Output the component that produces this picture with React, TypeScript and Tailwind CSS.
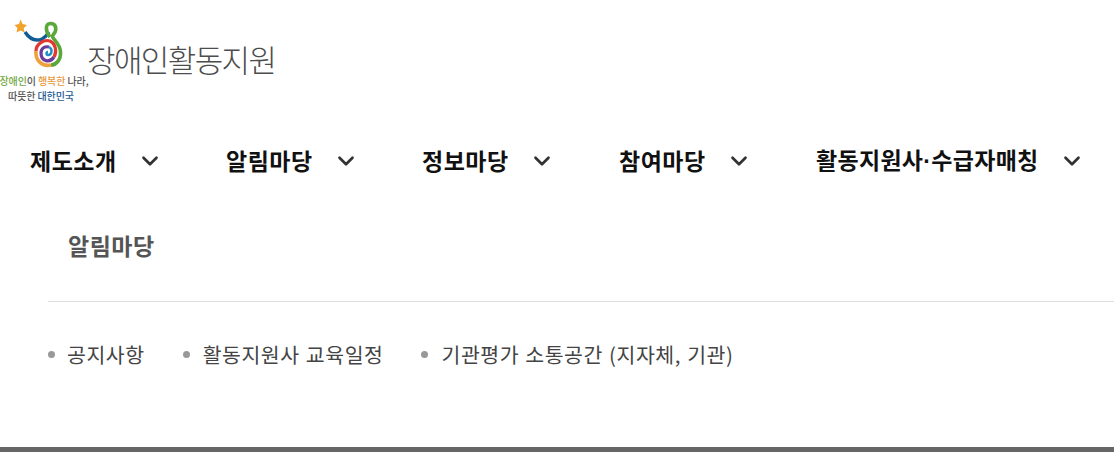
import { ChevronDown } from "lucide-react";

const font = { fontFamily: '"Noto Sans CJK KR", "Noto Sans", sans-serif' };

const menus = [
  { label: "제도소개", cls: "w-[196px]" },
  { label: "알림마당", cls: "w-[196px]" },
  { label: "정보마당", cls: "w-[197px]" },
  { label: "참여마당", cls: "w-[197px]" },
];

const Logo = () => (
  <svg viewBox="0 0 70 72" className="absolute left-0 top-0 h-[72px] w-[70px]">
    <polygon points="20.500,19.500 22.600,24 27,25 23.700,28.200 24.700,32.500 20.600,30.400 16.600,32.500 17.400,28 14.500,25 19,24" fill="#f0a42c" />
    <path d="M25 32 C29 38 35 42 42 39 C46 37 47 35 49 32" fill="none" stroke="#0f5c97" strokeWidth="3.400" />
    <path d="M50 37 C45 31 45 23 51 23.500 C57 24 57 31 53 35 C50 38 60 42 60.500 52 C61 60 56 65 51 65" fill="none" stroke="#5aa83a" strokeWidth="3.600" />
    <path d="M51 65 C42 67 35 60 36 51" fill="none" stroke="#f0a03a" strokeWidth="3.600" />
    <path d="M36 51 C36 44 44 39 50 41 C56 44 57 52 54 57" fill="none" stroke="#e2382d" strokeWidth="3.200" />
    <path d="M54 57 C50 63 41 62 41 53 C41 48 45 46 49 47" fill="none" stroke="#6b3a9e" strokeWidth="3.200" />
    <path d="M49 47 C53 49 52 55 48 55 C46 55 46 52 48 52" fill="none" stroke="#1f8fc4" strokeWidth="2.400" />
  </svg>
);

export default function App() {
  return (
    <div className="relative h-[452px] w-[1114px] overflow-hidden bg-white" style={font}>
      <header className="relative h-[124px]">
        <Logo />
        <div className="absolute left-[-1px] top-[73px] w-[90px] text-center text-[10px] leading-[15px] font-medium tracking-[-0.1px] text-[#555]">
          <div className="whitespace-nowrap">
            <span className="text-[#6fa83f]">장애인</span>이 <span className="text-[#e8973a]">행복한</span> 나라,
          </div>
          <div className="whitespace-nowrap pr-[6px]">
            따뜻한 <span className="text-[#1c5a94]">대한민국</span>
          </div>
        </div>
        <div className="absolute left-[87px] top-[37px] text-[31px] leading-[44px] tracking-[-1.6px] font-light text-[#4d4d4d]">
          장애인활동지원
        </div>
      </header>

      <nav className="flex h-[73px] items-center pl-[30px]">
        {menus.map((m) => (
          <div key={m.label} className={`flex items-center ${m.cls}`}>
            <span className="pb-[2px] text-[23px] leading-[32px] font-bold tracking-[0.5px] text-[#111]">{m.label}</span>
            <ChevronDown className="ml-[20px] h-[26px] w-[26px] text-[#333]" strokeWidth={2.5} />
          </div>
        ))}
        <div className="flex items-center">
          <span className="pb-[2px] text-[23px] leading-[32px] font-bold tracking-[0.3px] text-[#111]">
            활동지원사<span className="[font-family:'Liberation_Sans']">·</span>수급자매칭
          </span>
          <ChevronDown className="ml-[20px] h-[26px] w-[26px] text-[#333]" strokeWidth={2.5} />
        </div>
      </nav>

      <div className="pl-[48px]">
        <div className="flex h-[105px] items-center border-b border-[#dddddd] pb-[8px] pl-[20px]">
          <h2 className="text-[23px] leading-[32px] font-bold tracking-[0.5px] text-[#555]">알림마당</h2>
        </div>
        <ul className="flex pt-[37px] text-[20.5px] leading-[30px] tracking-[0.55px] [word-spacing:1px] text-[#444]">
          <li className="flex items-center">
            <span className="mr-[12px] h-[7px] w-[7px] rounded-full bg-[#999]" />
            공지사항
          </li>
          <li className="ml-[38px] flex items-center">
            <span className="mr-[13px] h-[7px] w-[7px] rounded-full bg-[#999]" />
            활동지원사 교육일정
          </li>
          <li className="ml-[38px] flex items-center">
            <span className="mr-[13px] h-[7px] w-[7px] rounded-full bg-[#999]" />
            기관평가 소통공간 (지자체, 기관)
          </li>
        </ul>
      </div>

      <div className="absolute bottom-0 left-0 h-[5px] w-full bg-[#666]" />
    </div>
  );
}
